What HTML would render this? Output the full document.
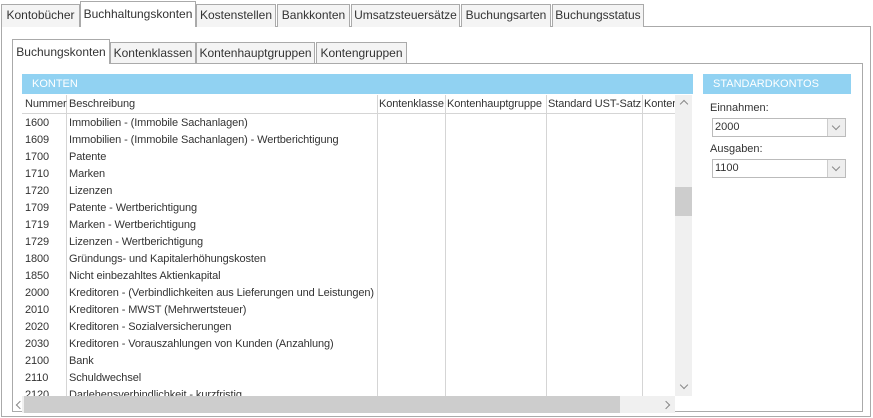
<!DOCTYPE html>
<html><head><meta charset="utf-8"><style>
*{box-sizing:border-box}
body{margin:0;width:873px;height:418px;background:#fff;font-family:"Liberation Sans",sans-serif;font-size:11px;color:#333;position:relative;overflow:hidden}
.a{position:absolute}
.tab{position:absolute;border:1px solid #aaa;border-bottom:none;background:#f4f4f4;text-align:center;line-height:20px;white-space:nowrap;font-size:12px}
.sel{background:#fff}
.hdr{position:absolute;background:#91d2f2;color:#fff;padding-left:10px;line-height:20px;font-size:11px}
.row{position:absolute;left:0;height:17px;line-height:17px;white-space:nowrap;letter-spacing:-0.1px}
.vl{position:absolute;top:0;width:1px;background:#d5d5d5}
.chev{position:absolute;width:6px;height:6px;border-right:1.3px solid #888;border-bottom:1.3px solid #888}
</style></head><body>
<div class="a" style="left:1px;top:26px;width:870px;height:391px;border:1px solid #aaa"></div>
<div class="tab" style="left:1px;top:4px;width:79px;height:23px">Kontobücher</div>
<div class="tab sel" style="left:80px;top:1px;width:116px;height:26px;line-height:24px">Buchhaltungskonten</div>
<div class="tab" style="left:196px;top:4px;width:80px;height:23px">Kostenstellen</div>
<div class="tab" style="left:277px;top:4px;width:73px;height:23px">Bankkonten</div>
<div class="tab" style="left:351px;top:4px;width:109px;height:23px">Umsatzsteuersätze</div>
<div class="tab" style="left:461px;top:4px;width:90px;height:23px">Buchungsarten</div>
<div class="tab" style="left:552px;top:4px;width:92px;height:23px">Buchungsstatus</div>
<div class="a" style="left:12px;top:63px;width:851px;height:349px;border:1px solid #aaa"></div>
<div class="tab sel" style="left:12px;top:39px;width:98px;height:25px;line-height:24px">Buchungskonten</div>
<div class="tab" style="left:110px;top:42px;width:86px;height:21px">Kontenklassen</div>
<div class="tab" style="left:196px;top:42px;width:119px;height:21px">Kontenhauptgruppen</div>
<div class="tab" style="left:316px;top:42px;width:91px;height:21px">Kontengruppen</div>
<div class="hdr" style="left:22px;top:74px;width:671px;height:20px">KONTEN</div>
<div class="hdr" style="left:703px;top:74px;width:148px;height:20px">STANDARDKONTOS</div>
<div class="a" style="left:22px;top:95px;width:653px;height:301px;overflow:hidden">
 <div class="vl" style="left:44px;height:301px"></div>
 <div class="vl" style="left:355px;height:301px"></div>
 <div class="vl" style="left:423px;height:301px"></div>
 <div class="vl" style="left:524px;height:301px"></div>
 <div class="vl" style="left:620px;height:301px"></div>
 <div class="a" style="left:0;top:18px;width:653px;height:1px;background:#d5d5d5"></div>
 <div class="row" style="top:1px;left:3px">Nummer</div><div class="row" style="top:1px;left:47px">Beschreibung</div>
 <div class="row" style="top:1px;left:357px">Kontenklasse</div><div class="row" style="top:1px;left:425px">Kontenhauptgruppe</div>
 <div class="row" style="top:1px;left:526px">Standard UST-Satz</div><div class="row" style="top:1px;left:622px">Konten</div>
 <div class="row" style="top:20px;left:3px;line-height:17px">1600<br>1609<br>1700<br>1710<br>1720<br>1709<br>1719<br>1729<br>1800<br>1850<br>2000<br>2010<br>2020<br>2030<br>2100<br>2110<br>2120</div>
 <div class="row" style="top:20px;left:47px;line-height:17px">Immobilien - (Immobile Sachanlagen)<br>Immobilien - (Immobile Sachanlagen) - Wertberichtigung<br>Patente<br>Marken<br>Lizenzen<br>Patente - Wertberichtigung<br>Marken - Wertberichtigung<br>Lizenzen - Wertberichtigung<br>Gründungs- und Kapitalerhöhungskosten<br>Nicht einbezahltes Aktienkapital<br>Kreditoren - (Verbindlichkeiten aus Lieferungen und Leistungen)<br>Kreditoren - MWST (Mehrwertsteuer)<br>Kreditoren - Sozialversicherungen<br>Kreditoren - Vorauszahlungen von Kunden (Anzahlung)<br>Bank<br>Schuldwechsel<br>Darlehensverbindlichkeit - kurzfristig</div>
</div>
<div class="a" style="left:675px;top:95px;width:17px;height:301px;background:#f0f0f0"></div>
<div class="a" style="left:675px;top:187px;width:17px;height:29px;background:#cdcdcd"></div>
<div class="chev" style="left:681px;top:101px;transform:rotate(-135deg)"></div>
<div class="chev" style="left:681px;top:382px;transform:rotate(45deg)"></div>
<div class="a" style="left:22px;top:396px;width:653px;height:17px;background:#f0f0f0"></div>
<div class="a" style="left:24px;top:396px;width:596px;height:17px;background:#cdcdcd"></div>
<div class="chev" style="left:17px;top:402px;transform:rotate(135deg)"></div>
<div class="chev" style="left:663px;top:402px;transform:rotate(-45deg)"></div>
<div class="a" style="left:710px;top:102px">Einnahmen:</div>
<div class="a" style="left:712px;top:118px;width:134px;height:19px;border:1px solid #bbb;line-height:17px;padding-left:2px">2000</div>
<div class="a" style="left:827px;top:119px;width:18px;height:17px;background:#eee;border-left:1px solid #ccc"></div>
<div class="chev" style="left:833px;top:123px;transform:rotate(45deg)"></div>
<div class="a" style="left:710px;top:143px">Ausgaben:</div>
<div class="a" style="left:712px;top:159px;width:134px;height:19px;border:1px solid #bbb;line-height:17px;padding-left:2px">1100</div>
<div class="a" style="left:827px;top:160px;width:18px;height:17px;background:#eee;border-left:1px solid #ccc"></div>
<div class="chev" style="left:833px;top:164px;transform:rotate(45deg)"></div>
</body></html>
